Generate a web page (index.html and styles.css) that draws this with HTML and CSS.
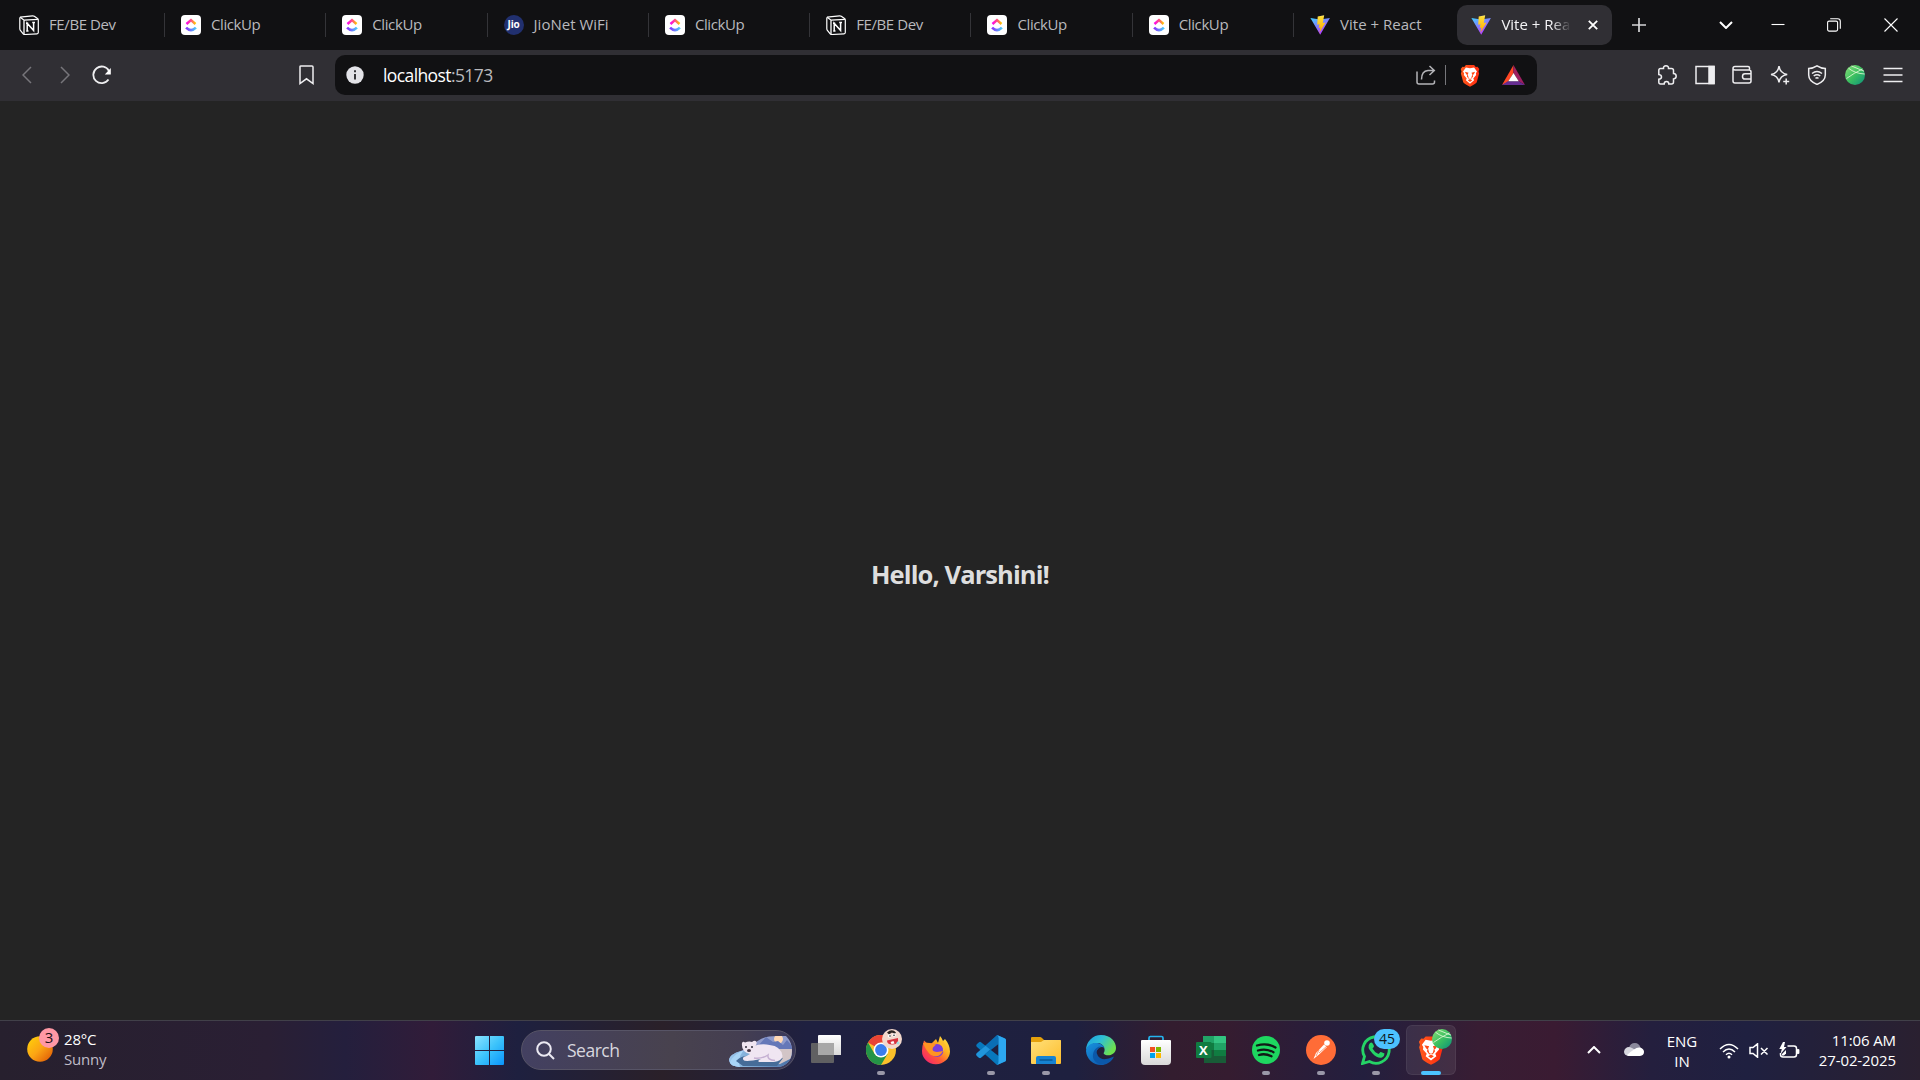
FILE: index.html
```html
<!DOCTYPE html>
<html lang="en">
<head>
<meta charset="utf-8">
<title>Vite + React</title>
<link rel="stylesheet" href="styles.css">
</head>
<body>
<svg class="defs" width="0" height="0">
  <defs>
    <linearGradient id="cuTop" x1="0" x2="1"><stop offset="0" stop-color="#ff02f0"/><stop offset=".5" stop-color="#ff4f81"/><stop offset="1" stop-color="#ffc800"/></linearGradient>
    <linearGradient id="cuBot" x1="0" x2="1"><stop offset="0" stop-color="#8930fd"/><stop offset="1" stop-color="#49ccf9"/></linearGradient>
    <linearGradient id="viteA" x1="0" y1="0" x2=".6" y2="1"><stop offset="0" stop-color="#41d1ff"/><stop offset="1" stop-color="#bd34fe"/></linearGradient>
    <linearGradient id="viteB" x1="0" y1="0" x2="0" y2="1"><stop offset="0" stop-color="#ffea83"/><stop offset=".1" stop-color="#ffdd35"/><stop offset="1" stop-color="#ffa800"/></linearGradient>
    <linearGradient id="ball" x1="0" y1="0" x2="1" y2="1"><stop offset="0" stop-color="#8be07a"/><stop offset=".5" stop-color="#3cc060"/><stop offset="1" stop-color="#0b8f7c"/></linearGradient>
    <linearGradient id="sun" x1="0" y1="0" x2="1" y2="1"><stop offset="0" stop-color="#ffd50a"/><stop offset=".5" stop-color="#fba414"/><stop offset="1" stop-color="#dc5004"/></linearGradient>
    <linearGradient id="win" gradientUnits="userSpaceOnUse" x1="0" y1="0" x2="29" y2="29"><stop offset="0" stop-color="#8be4ff"/><stop offset=".5" stop-color="#3cc3fb"/><stop offset="1" stop-color="#0a94fb"/></linearGradient>
    <linearGradient id="fold" x1="0" y1="0" x2="1" y2="1"><stop offset="0" stop-color="#ffe07a"/><stop offset="1" stop-color="#fdbd2c"/></linearGradient>
    <linearGradient id="white" x1="0" y1="0" x2="0" y2="1"><stop offset="0" stop-color="#fff"/><stop offset="1" stop-color="#d9d9d9"/></linearGradient>
    <linearGradient id="ffx" x1="1" y1="0" x2="0" y2="1"><stop offset="0" stop-color="#fff44f"/><stop offset=".35" stop-color="#ffae1f"/><stop offset=".6" stop-color="#ff5a36"/><stop offset="1" stop-color="#f1137f"/></linearGradient>
    <linearGradient id="edgeA" x1="0" y1="0" x2="1" y2=".5"><stop offset="0" stop-color="#1b9de2"/><stop offset=".5" stop-color="#2fc0d4"/><stop offset="1" stop-color="#6ee04f"/></linearGradient>
    <linearGradient id="edgeB" x1="0" y1="0" x2="1" y2="1"><stop offset="0" stop-color="#1793e0"/><stop offset="1" stop-color="#0d4ba0"/></linearGradient>
    <linearGradient id="water" x1="0" x2="1"><stop offset="0" stop-color="#9cc9ee"/><stop offset="1" stop-color="#466fa5"/></linearGradient>
    <linearGradient id="brave" x1="0" x2="1"><stop offset="0" stop-color="#ff5a1c"/><stop offset="1" stop-color="#ff2a10"/></linearGradient>
    <clipPath id="scene"><path d="M1 24C3 15 17 16 26 8 35-1 46 0 58 0 63 5 64 10 64 15 64 25 57 31 49 31H14C6 31 2 29 1 24Z"/></clipPath>

    <symbol id="notion" viewBox="0 0 20 20"><path d="M1 2.2 13.5.8q1-.1 1.8.5l3.2 2.3q.8.5.8 1.4v12.5q0 1.2-1.3 1.3L5.6 19.5q-1 .1-1.6-.8L1.2 15.200Q.8 14.500.8 13.500V3.300Q.8 2.300 2 2.200Z" fill="#111113" stroke="#fff" stroke-width="1.200"/><path d="m1.500 2.500 3.600 2.700 13.800-.9M5 5.200V19" fill="none" stroke="#fff" stroke-width="1.300"/><path d="M8.200 16V8.200L14.600 15.500V7.500M7 8.200h2.200M7.200 16.100h2.300M13.200 7.500H16" fill="none" stroke="#fff" stroke-width="1.500"/></symbol>
    <symbol id="clickup" viewBox="0 0 20 20"><rect width="20" height="20" rx="4" fill="#fff"/><path d="m5.500 9 4.500-3.900L14.500 9" fill="none" stroke="url(#cuTop)" stroke-width="2.500"/><path d="M5.100 12.600q4.900 5 9.800 0" fill="none" stroke="url(#cuBot)" stroke-width="2.600"/></symbol>
    <symbol id="vite" viewBox="0 0 20 20"><path d="M.4 3 10.200 19.800 19.900 3 10 4.500Z" fill="url(#viteA)"/><path d="m14.200.2-6.500 1.300-.5 8.200 2.300-.5-.8 3.800 1.800-.5-1.100 5.300L15.500 7.500l-2.700.5Z" fill="url(#viteB)"/></symbol>
    <symbol id="lion" viewBox="0 0 24 28"><path d="M7 1.300h10l2 2.200 2.200-.3 2.100 3-1 2.800.8 2.500-2.900 10.800Q19.600 24 12 27.700 4.400 24 3.800 22.300L.9 11.500 1.700 9l-1-2.800 2.100-3 2.200.3Z" fill="url(#brave)"/><path d="m12 5.300 5-.9L20.500 9l-1.300 2.300.3 2.200-3.500 4.100 1 2.300-5 4-5-4 1-2.300-3.500-4.100.3-2.200L3.500 9 7 4.400Z" fill="#fff"/><path d="m5.800 9.500 4.500 1-1 2 1 4.100L12 18l1.700-1.400 1-4.100-1-2 4.500-1-1.700 3.200-1.300.5.6 2-2.300 2.900-1.500-.9-1.500.9L8.200 15.200l.6-2-1.300-.5ZM9.300 19.800 12 21.800l2.700-2L12 18.300Z" fill="#ff4a18"/><path d="m12 9.500 1 3.500-.3 3h-1.400l-.3-3Z" fill="#fff"/></symbol>
    <symbol id="globe" viewBox="0 0 20 20"><circle cx="10" cy="10" r="10" fill="url(#ball)"/><path d="M1.500 13.500Q9 8 17.500 4M3.500 3.200Q10 8.600 19.700 9M6.500 1 19 6.200" fill="none" stroke="#d9f5d0" stroke-width=".9"/></symbol>
  </defs>
</svg>

<header class="tabs">
  <div class="tab"><svg><use href="#notion"/></svg><span>FE/BE Dev</span></div>
  <div class="tab"><svg><use href="#clickup"/></svg><span>ClickUp</span></div>
  <div class="tab"><svg><use href="#clickup"/></svg><span>ClickUp</span></div>
  <div class="tab wide"><i class="jio">Jio</i><span>JioNet WiFi</span></div>
  <div class="tab"><svg><use href="#clickup"/></svg><span>ClickUp</span></div>
  <div class="tab"><svg><use href="#notion"/></svg><span>FE/BE Dev</span></div>
  <div class="tab"><svg><use href="#clickup"/></svg><span>ClickUp</span></div>
  <div class="tab"><svg><use href="#clickup"/></svg><span>ClickUp</span></div>
  <div class="tab wide last"><svg><use href="#vite"/></svg><span>Vite + React</span></div>
  <div class="tab wide active"><svg><use href="#vite"/></svg><span class="fade">Vite + React</span>
    <svg class="close" viewBox="0 0 10 10"><path d="m.8.8 8.400 8.400m0-8.400L.8 9.200"/></svg></div>
  <svg class="plus" viewBox="0 0 14 14"><path d="M7 0v14M0 7h14"/></svg>
  <div class="window">
    <svg width="14" height="8" viewBox="0 0 14 8" class="bold"><path d="m1 1 6 6 6-6"/></svg>
    <svg width="14" height="14" viewBox="0 0 14 14"><path d="M.5 6.500h13"/></svg>
    <svg width="14" height="14" viewBox="0 0 14 14"><rect x=".6" y="3.100" width="10" height="10" rx="1.500"/><path d="M3.200.7H10.700q2.600 0 2.600 2.600v7.500"/></svg>
    <svg width="14" height="14" viewBox="0 0 14 14"><path d="m.5.5 13 13m0-13-13 13"/></svg>
  </div>
</header>

<nav class="toolbar">
  <div class="history">
    <svg class="dim" width="10" height="18" viewBox="0 0 10 18"><path d="m9 1-8 8 8 8"/></svg>
    <svg class="dim" width="10" height="18" viewBox="0 0 10 18"><path d="m1 1 8 8-8 8"/></svg>
    <svg class="reload" width="20" height="20" viewBox="0 0 20 20"><path d="M16.500 14.500A8.300 8.300 0 1 1 17 6"/><path class="solid" d="M18.800 3v6.500h-6Z"/></svg>
  </div>
  <svg class="bookmark" width="15" height="20" viewBox="0 0 15 20"><path d="M1 1.500Q1 1 2 1H13q1 0 1 1V18.500L7.500 13.800 1 18.500Z"/></svg>
  <div class="address">
    <svg width="18" height="18" viewBox="0 0 18 18"><circle cx="9" cy="9" r="8.700" fill="#e3e3e8" stroke="none"/><path d="M9 8v5.500M9 4.300v2" stroke="#222226" stroke-width="1.800"/></svg>
    <span class="url">localhost<em>:5173</em></span>
    <svg class="share" width="20" height="20" viewBox="0 0 20 20"><path d="M1 6.500V17q0 2 2 2H16.500q2 0 2-2v-1.500M5.500 14.500Q5.500 6 12 5.500h6M13.500 1l4.800 4.500L13.500 10"/></svg>
    <i class="rule"></i>
    <svg class="art" width="20" height="23"><use href="#lion"/></svg>
    <svg class="art bat" width="23" height="20" viewBox="0 0 22 19"><path d="M11 0v7.500L5.500 16.500 0 19Z" fill="#ff4724"/><path d="M11 0 22 19 16 15.500 11 7.500Z" fill="#9e1f63"/><path d="M0 19 5.500 15.500h10.500L22 19Z" fill="#662d91"/><path d="m11 7.500 5 8H6Z" fill="#fff"/></svg>
  </div>
  <div class="actions">
    <svg viewBox="0 0 20 20"><path d="M3.500 3.500H6.500Q6.300.8 9 .8t2.500 2.700h3q2 0 2 2v3q2.700.3 2.700 2.700t-2.700 2.700V17q0 2-2 2h-2.700q0-2.500-2.300-2.500T7.200 19H3.500q-1.700 0-1.700-1.700v-3.100q2.700-.3 2.700-2.300T1.800 9.500V5.200q0-1.700 1.700-1.700Z"/></svg>
    <svg viewBox="0 0 20 20"><rect x="1" y="1.500" width="18" height="17"/><path d="M14 1.500h5v17h-5Z" fill="#eeeef0"/></svg>
    <svg viewBox="0 0 20 20"><path d="M1 3.500Q1 1.500 3 1.500H16q1.500 0 1.500 1.500v2M1 3.500q0 1.500 2 1.500H17q2 0 2 2V16q0 2-2 2H3q-2 0-2-2ZM19 8.800h-6q-2.500 0-2.500 2.600T13 14h6"/></svg>
    <svg viewBox="0 0 20 20"><path d="M9 1q1 7.300 8.200 8.500Q10 10.500 9 17.500 8 10.500 1 9.500 8 8.500 9 1Z"/><path d="M16.200 13.500v6M13.200 16.500h6"/></svg>
    <svg viewBox="0 0 20 20"><path d="M10 .8q4 2.600 8.300 2.600V10q0 6-8.300 9.400Q1.700 16 1.700 10V3.400Q6 3.400 10 .8ZM5 8.500q5-4 10 0M6.700 11q3.300-2.500 6.600 0M8.500 13.300q1.500-1 3 0"/></svg>
    <svg class="art"><use href="#globe"/></svg>
    <svg viewBox="0 0 20 20"><path d="M.5 3.500h19M.5 10h19M.5 16.500h19"/></svg>
  </div>
</nav>

<main class="page"><h1>Hello, Varshini!</h1></main>

<footer class="taskbar">
  <div class="weather">
    <div class="sun"><svg width="26" height="26"><circle cx="13" cy="13" r="12.800" fill="url(#sun)"/></svg><b>3</b></div>
    <div><p>28°C</p><p class="muted">Sunny</p></div>
  </div>
  <div class="dock">
    <svg class="start" width="29" height="29" viewBox="0 0 29 29"><path d="M1 0H14V14H0V1Q0 0 1 0ZM15 0H28Q29 0 29 1V14H15ZM0 15H14V29H1Q0 29 0 28ZM15 15H29V28Q29 29 28 29H15Z" fill="url(#win)"/></svg>
    <div class="search">
      <svg width="19" height="19" viewBox="0 0 19 19"><circle cx="8" cy="8" r="6.800"/><path d="m13 13 5 5"/></svg>
      <span>Search</span>
      <svg class="bear" width="64" height="31" viewBox="0 0 64 31"><g clip-path="url(#scene)"><path d="M0 0h64v31H0Z" fill="#8f9bcb"/><circle cx="50.500" cy="3" r="4.500" fill="#ffd8b4"/><path d="M28 12 38 1l7 5 5-1 5 4 4-5 5 6v5H28Z" fill="#6578b8"/><path d="M0 15h64v16H0Z" fill="url(#water)"/><path d="M0 31Q5 14 26 12H18Q8 22 12 31Z" fill="#a8d4f6"/><path d="M44 13h20v9L52 28H40Z" fill="#d2c5c7"/><path d="M8 25Q15 17 30 21T55 22L49 30H15Z" fill="#466c98"/></g><path d="M14 7q1-2 3-.5 4-1.500 7-.5 3-2.500 4.500 0 .5 2-1 3.500 7-2 14-.5Q53 10 54.500 20 54 25 46 26H31q-2-1.500 2-3l-8 1.500q-9 1-9.500-.5-2-3 3-4l3.500-2Q13 16 14 7Z" fill="#f0e6f2"/><path d="M26 22q8 1 14-3-1 5 7 5.500" fill="none" stroke="#c5b0d2" stroke-width="1.500"/><circle cx="18" cy="11" r="1" fill="#302c3b"/><circle cx="24" cy="11" r="1" fill="#302c3b"/><ellipse cx="21" cy="14.500" rx="2" ry="1.500" fill="#453643"/></svg>
    </div>
    <svg class="views" width="30" height="28" viewBox="0 0 30 28"><path d="M8 0H29q1 0 1 1V20H7V1Q7 0 8 0Z" fill="url(#white)"/><path d="M1 8H22q1 0 1 1V27q0 1-1 1H1q-1 0-1-1V9Q0 8 1 8Z" fill="#606062"/><path d="M7 8h16v12H7Z" fill="#a8a8a8"/></svg>
    <div class="app run"><svg viewBox="0 0 30 30"><circle cx="15" cy="15" r="15" fill="#fbc02a"/><path d="M15 15 2 7.500A15 15 0 0 1 28 7.500H15Z" fill="#e94335"/><path d="M2 7.500A15 15 0 0 0 15 30l6.500-11L15 15l-6.500 3.700Z" fill="#249447"/><circle cx="15" cy="15" r="7.500" fill="#fff"/><circle cx="15" cy="15" r="5.900" fill="#3b7ded"/></svg>
      <svg class="badge" viewBox="0 0 20 20"><circle cx="10" cy="10" r="10" fill="#f3d8cc"/><path d="M5 3.500Q10-1 14 3.500L12.500 5 10 3.500 7 5.500Z" fill="#29221f"/><circle cx="7.500" cy="7" r="1.800" fill="#fff"/><circle cx="12" cy="6" r="1.800" fill="#fff"/><circle cx="8" cy="7" r=".8" fill="#222"/><circle cx="12" cy="6.300" r=".8" fill="#222"/><path d="M5 11.500 16 9q1 6-5 6.500T5 11.500Z" fill="#d9333f"/><path d="m8.500 13 3-1 1 2.500-3 .5Z" fill="#fff"/><circle cx="16" cy="14" r="1.500" fill="#9cdde2"/></svg></div>
    <div class="app"><svg viewBox="0 0 30 30"><path d="M3 5.500 7 9l4-1 4-4 2 4 2-7q2 2 3 5l2-2Q29 10 29 16.500A14 13 0 0 1 1 16Q1 11 3 5.500Z" fill="url(#ffx)"/><circle cx="16" cy="15.500" r="6.500" fill="#793edb"/><path d="M2 8q7-1 9 1l4 .5-3 3q-2 4 4 4.500 4-.5 6-1-4 8-12 4-5-4-8-12Z" fill="#ff9422"/><path d="M16 8q7 1 6 9l3-5-3-6Z" fill="#ffbd2d"/></svg></div>
    <div class="app run"><svg viewBox="0 0 30 30"><path d="M21 0 29 3.500Q30 4 30 5V25q0 1-1 1.500L21 30 1 12Q-.5 10.500 1 9l2-1.800q1-.7 2 0L22.500 21V2Z" fill="#0878bd"/><path d="M21 0Q23 1 22.500 3V9L5 22.800q-1 .7-2 0L1 21q-1.500-1.500 0-3Z" fill="#0a6eb5"/><path d="m21 0 8 3.500q1 .5 1 1.500V25q0 1-1 1.500L21 30q1.500-1 1.500-3V3Q22.500 1 21 0Z" fill="#2da7f0"/><path d="M1 18 9.500 10.800l4.600 3.800L5 22.500q-1 .9-2 .2L1 21q-1.500-1.500 0-3Z" fill="#2196dc"/></svg></div>
    <div class="app run"><svg viewBox="0 0 30 30"><path d="M1 2H9q1 0 2 1l2 2H29q1 0 1 1v10H0V3Q0 2 1 2Z" fill="#e5a10c"/><path d="M0 7h10l3-2h16q1 0 1 1v22q0 1-1 1H1q-1 0-1-1Z" fill="url(#fold)"/><path d="M5 29v-6q0-2 2-2h16q2 0 2 2v6Z" fill="#1683d2"/><path d="M8.500 25h13" stroke="#064d88" stroke-width="1.200"/></svg></div>
    <div class="app"><svg viewBox="0 0 30 30"><path d="M0 15A15 15 0 0 1 15 0C25 0 30 7 30 13 30 20 21 22 18 19 17 18 19 17 18.500 14 17 6 5 6 0 15Z" fill="url(#edgeA)"/><path d="M0 16C1 6 16 6 18.500 13 15 10 10 14 10 19 10 27 20 28 28 22 23 30 17 30 15 30A15 15 0 0 1 0 16Z" fill="url(#edgeB)"/><path d="M15 11.500Q8 15 12 21t16 .5q-6 8-14 8Q4 25 8 16 11 11 15 11.500Z" fill="#0b58a9"/></svg></div>
    <div class="app"><svg viewBox="0 0 30 30"><path d="M8 7V3q0-1.500 1.500-1.500h11Q22 1.500 22 3v4" fill="none" stroke="#24b4ef" stroke-width="1.700"/><path d="M0 6q0-1 1-1h28q1 0 1 1v20q0 4-4 4H4q-4 0-4-4Z" fill="url(#white)"/><path d="M9 12h5v5H9Z" fill="#f15022"/><path d="M15 12h5v5h-5Z" fill="#7eb900"/><path d="M9 18h5v5H9Z" fill="#00a2ec"/><path d="M15 18h5v5h-5Z" fill="#fdb800"/></svg></div>
    <div class="app excel"><svg viewBox="0 0 30 30"><path d="M8 1H29q1 0 1 1V28H8Z" fill="#185c37"/><path d="M7 1h11v7H7Z" fill="#21a366"/><path d="M18 1h11q1 0 1 1v6H18Z" fill="#33c481"/><path d="M18 8h12v7H18Z" fill="#21a366"/><path d="M7 8h11v7H7ZM18 15h12v6H18Z" fill="#107c41"/><rect y="7" width="15.500" height="16" rx="1" fill="#107c41"/></svg><b>X</b></div>
    <div class="app run"><svg viewBox="0 0 30 30"><circle cx="15" cy="15" r="14" fill="#1ed760"/><path d="M6 10.500q10-3 18.500 2M7 15.500q8-2.500 15.500 1.700M8 20q6-2 12.500 1.300" fill="none" stroke="#111916" stroke-width="2.300" stroke-linecap="round"/></svg></div>
    <div class="app run"><svg viewBox="0 0 30 30"><circle cx="15" cy="15" r="15" fill="#ff6c37"/><circle cx="21" cy="8" r="2.800" fill="#fff"/><path d="m10 18 8-8.500 3 2.500-8 7.500-5.500 4.500Z" fill="#fff"/><path d="m13 18 8-7M10 21l3-6" stroke="#ff6c37" stroke-width=".7"/></svg></div>
    <div class="app run"><svg viewBox="0 0 30 30"><path d="m1.500 28.500 2-7A13.200 13.200 0 1 1 8.500 26.500Z" fill="none" stroke="#25d366" stroke-width="2.800"/><path d="M9 8q2-1.500 3 1l1 2q0 1-1.500 2.500 2 4 6 5.500l2-2q.5-.5 4 1.500 0 3-2.500 4-4 1.500-9.500-4Q5 12 9 8Z" fill="#25d366"/></svg><b class="count">45</b></div>
    <div class="app current"><svg viewBox="0 0 24 28"><use href="#lion"/></svg><svg class="badge"><use href="#globe"/></svg></div>
  </div>
  <div class="tray">
    <svg class="up" width="14" height="8" viewBox="0 0 14 8"><path d="m1 7 6-6 6 6"/></svg>
    <svg class="cloud" width="20" height="13" viewBox="0 0 20 13"><path d="M5 5Q6 0 11 0q4 0 5.500 4.500L20 9H5Z" fill="#8b899c"/><path d="M0 8.500Q1 4 5 4q2 0 8 4l-8 5q-5-.5-5-4.500Z" fill="#d7d7df"/><path d="M3 12q3-3 7-5.500Q13 4 16 4.500q4 1 4 4.500t-4 4H5Q3.500 13 3 12Z" fill="#fff"/></svg>
    <div class="lang"><p>ENG</p><p>IN</p></div>
    <div class="status">
      <svg width="20" height="16" viewBox="0 0 20 16"><path d="M1 6q9-9 18 0M4 9q6-6 12 0M7 11.700q3-3 6 0"/><circle cx="10" cy="14" r="1.500" fill="#fff" stroke="none"/></svg>
      <svg width="20" height="15" viewBox="0 0 20 15"><path d="M1 4.500h3l4.500-3.700v13.400L4 10.500H1ZM12 5l6.500 6.500m0-6.500L12 11.500"/></svg>
      <svg width="21" height="17" viewBox="0 0 21 17"><path d="M8.500 4H15q2.500 0 2.500 2.500v6Q17.500 15 15 15H4q-2.500 0-2.500-2.500V11"/><path d="M18 7.500v4h2v-4Z" fill="#fff" stroke-width=".8"/><path d="M4 0 .3 7h2.500L1.500 12 7.500 5H5L6 0Z" fill="#fff" stroke="none"/><path d="M3 13.500V12l4-4v3.500l-2 2Z" fill="#fff" stroke="none"/></svg>
    </div>
    <div class="clock"><p>11:06 AM</p><p>27-02-2025</p></div>
  </div>
</footer>
</body>
</html>
```
FILE: styles.css
```css
* { box-sizing: border-box; }
body {
  margin: 0;
  width: 1920px;
  height: 1080px;
  overflow: hidden;
  display: flex;
  flex-direction: column;
  background: #242424;
  font-family: "Open Sans", "Noto Sans", sans-serif;
  color: #fff;
}
p, h1 { margin: 0; }
i, em { font-style: normal; }
svg { display: block; flex: none; }
.defs { position: absolute; }

.tabs { height: 50px; background: #111113; display: flex; align-items: center; flex: none; }
.tab {
  flex: none;
  width: 161.3px;
  height: 24px;
  padding-left: 16px;
  display: flex;
  align-items: center;
  gap: 10px;
  border-right: 1px solid #343438;
  color: #b9b9bd;
  font-size: 15px;
  letter-spacing: -0.4px;
  white-space: nowrap;
}
.tab:first-child { width: 165px; padding-left: 19px; }
.tab.wide { letter-spacing: 0; }
.tab svg { width: 20px; height: 20px; }
.tab span { padding-bottom: 2px; }
.tab.last { border: 0; }
.tab.active {
  width: 155px;
  height: 40px;
  margin-left: 2px;
  padding-left: 14px;
  border: 0;
  border-radius: 10px;
  background: #302f34;
  color: #f4f4f6;
}
.fade {
  width: 70px;
  overflow: hidden;
  -webkit-mask-image: linear-gradient(90deg, #000 72%, transparent);
  mask-image: linear-gradient(90deg, #000 72%, transparent);
}
.tab .close { width: 10px; height: 10px; margin-left: 7px; fill: none; stroke: #fff; stroke-width: 1.8; }
.jio {
  width: 20px;
  height: 20px;
  border-radius: 50%;
  background: #21306f;
  color: #fff;
  font-size: 10px;
  font-weight: 700;
  line-height: 19px;
  letter-spacing: -0.2px;
  text-align: center;
}
.plus { width: 14px; height: 14px; margin-left: 20px; fill: none; stroke: #d5d5d8; stroke-width: 1.7; }
.window { display: flex; align-items: center; margin-left: 73px; }
.window svg { fill: none; stroke: #fff; stroke-width: 1.1; }
.window svg:nth-child(2) { margin-left: 38px; }
.window svg:nth-child(3) { margin-left: 42px; }
.window svg:nth-child(4) { margin-left: 43px; }
.window .bold { stroke-width: 2; }

.toolbar {
  height: 51px;
  flex: none;
  padding: 0 0 1px 22px;
  display: flex;
  align-items: center;
  background: #302f34;
}
.toolbar svg { fill: none; stroke: #eeeef0; stroke-width: 1.5; }
.toolbar .art { stroke: none; }
.history { display: flex; align-items: center; gap: 28px; }
.history .dim { stroke: #77767b; }
.history .reload { margin-left: -6px; stroke-width: 1.8; }
.reload .solid { fill: #fff; stroke: none; }
.bookmark { margin-left: 187px; }
.address {
  width: 1202px;
  height: 40px;
  margin-left: 21px;
  padding-left: 11px;
  display: flex;
  align-items: center;
  flex: none;
  border-radius: 10px;
  background: #111113;
}
.url { flex: none; width: 1037px; padding-left: 19px; font-size: 17.5px; letter-spacing: -0.6px; line-height: 24px; margin: 0 14px 1px 0; }
.url em { color: #b9b9bd; }
.toolbar .share { stroke: #b4b4b8; margin-left: 1px; }
.rule { width: 1px; height: 20px; margin: 0 14px 0 9px; background: #77777b; }
.bat { margin-left: 22px; }
.actions { display: flex; align-items: center; margin-left: 120px; gap: 17.6px; }
.actions svg { width: 20px; height: 20px; }

.page { flex: 1; display: flex; justify-content: center; align-items: center; }
.page h1 { color: #dedede; font-size: 25.5px; font-weight: 700; line-height: 36px; padding-top: 26px; letter-spacing: -0.9px; }

.taskbar {
  height: 60px;
  flex: none;
  position: relative;
  display: flex;
  border-top: 1px solid #414049;
  background: linear-gradient(90deg, #27202e 0, #2a1f34 14%, #241f3d 18%, #311c39 22.500%, #1e203f 27%, #2a2029 34.500%, #1f2040 42%, #1e203f 56%, #331d2f 61%, #351c30 64%, #2a1d39 68%, #231f3e 71%, #381d33 77%, #3a1b32 81%, #241f3e 86%, #1f2040 91%, #2a2030 100%);
}
.weather { display: flex; width: 473px; padding: 8px 0 0 27px; gap: 11px; font-size: 15px; line-height: 20px; letter-spacing: -0.2px; }
.weather .muted { color: #c0bdc9; }
.sun { position: relative; width: 26px; padding-top: 7px; }
.sun b { position: absolute; left: 12px; top: -1px; width: 20px; height: 20px; border-radius: 50%; background: #ff98a5; color: #1b1015; font-weight: 400; text-align: center; line-height: 19px; }

.dock { display: flex; align-items: center; height: 58px; }
.start { margin-left: 2px; }
.search {
  width: 275px;
  height: 40px;
  margin: 0 15px 0 17px;
  padding: 0 3px 0 14px;
  display: flex;
  align-items: center;
  border: 1px solid #575466;
  border-radius: 20px;
  background: linear-gradient(90deg, #434061, #48424e 55%, #443e51 80%, #39385a);
  font-size: 17.5px;
  letter-spacing: -0.5px;
  color: #d8d7df;
}
.search span { margin-left: 12px; flex: 1; }
.search svg:first-child { fill: none; stroke: #eceaf3; stroke-width: 2; }
.bear { margin-top: 3px; }
.views { margin: 0 15px 2px 0; }
.app { position: relative; width: 50px; height: 50px; margin-right: 5px; display: grid; place-items: center; }
.app > svg { width: 30px; height: 30px; }
.app > .badge { position: absolute; left: 26px; top: 4px; width: 20px; height: 20px; }
.run::after, .current::after { content: ""; position: absolute; left: 21px; bottom: 0; width: 8px; height: 4px; border-radius: 2px; background: #9a98a8; }
.current { border-radius: 6px; background: rgba(255,255,255,.08); box-shadow: inset 0 0 0 1px rgba(255,255,255,.06); }
.current::after { left: 15px; width: 20px; background: #4cc2ff; }
.excel b { position: absolute; left: 13px; top: 15px; font-size: 13px; line-height: 20px; }
.count { position: absolute; left: 23px; top: 4px; width: 26px; height: 20px; border-radius: 10px; background: #4cc2ff; color: #101820; font-weight: 400; font-size: 14px; line-height: 19px; text-align: center; }

.tray { position: absolute; right: 24px; top: 0; height: 57px; display: flex; align-items: center; font-size: 15px; line-height: 20px; }
.tray svg { fill: none; stroke: #fff; stroke-width: 1.5; }
.tray .up { stroke-width: 2; }
.tray .cloud { stroke: none; margin-left: 23px; }
.lang { width: 52px; margin-left: 12px; padding-top: 2px; text-align: center; }
.status { display: flex; align-items: center; gap: 10px; margin-left: 11px; padding-top: 2px; }
.clock { width: 96px; text-align: right; white-space: nowrap; letter-spacing: -0.1px; }
```
